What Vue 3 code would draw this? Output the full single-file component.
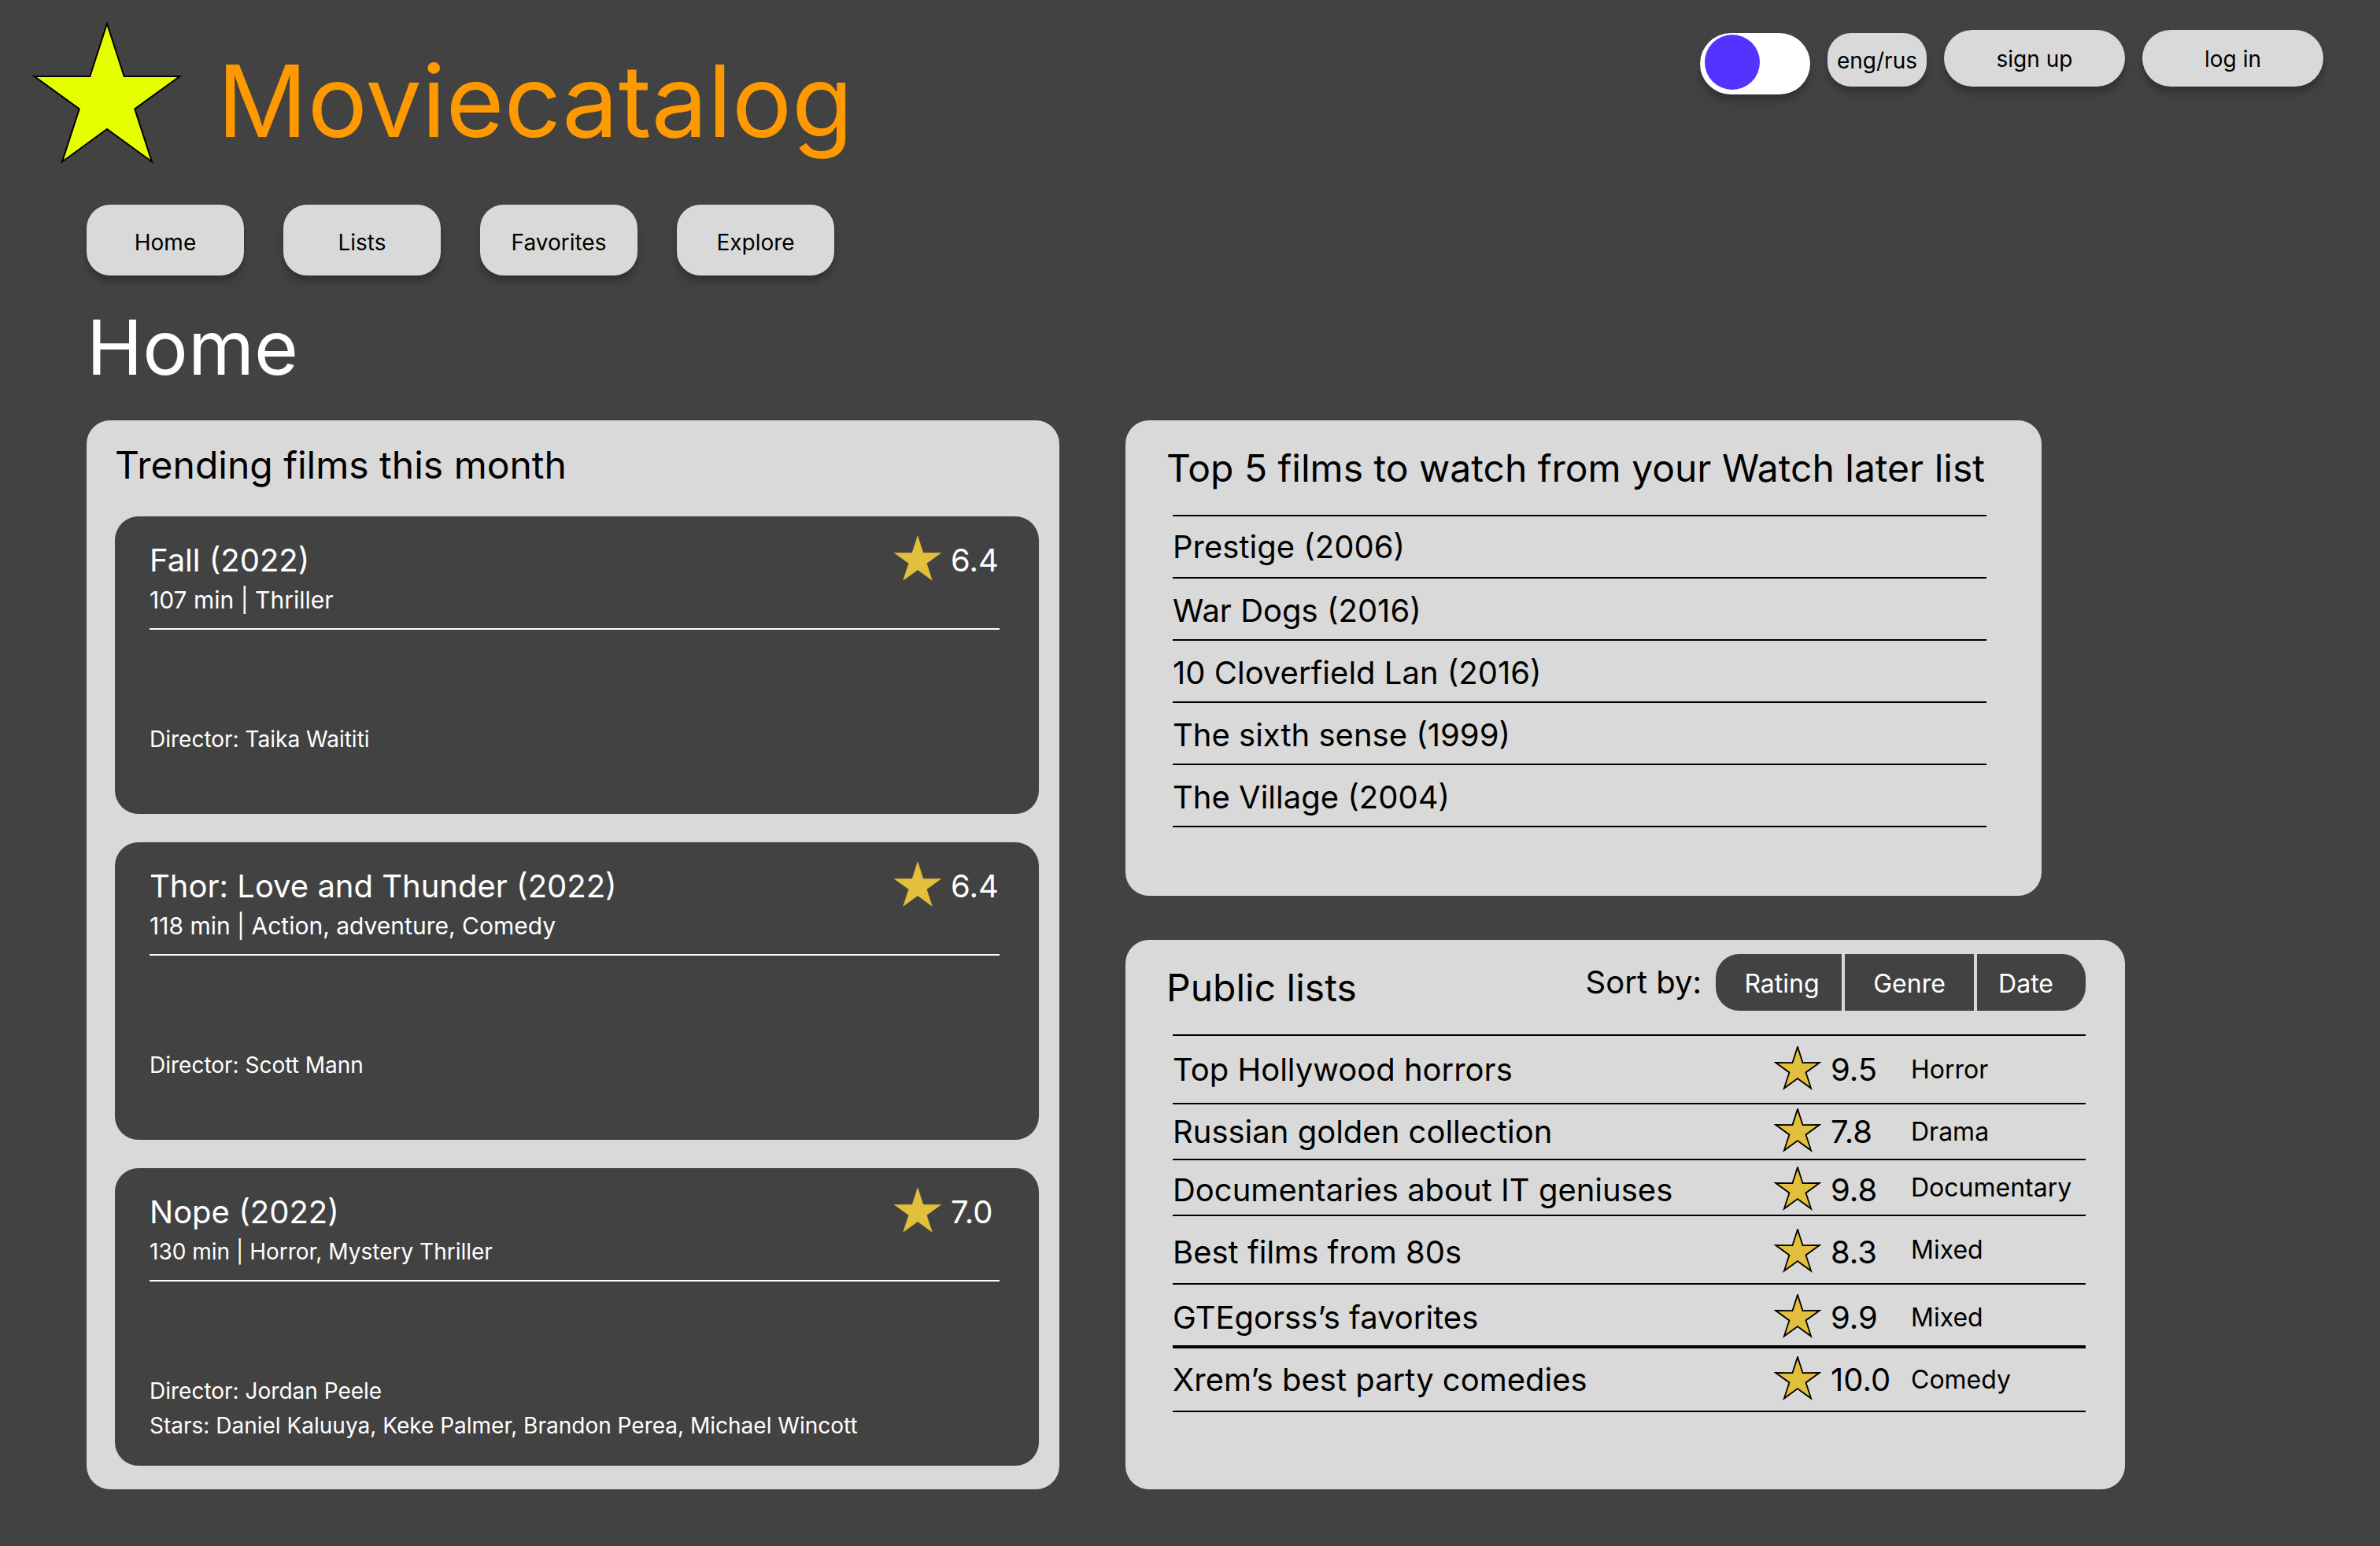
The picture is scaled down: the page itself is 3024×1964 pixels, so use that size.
<script setup>
import { ref } from 'vue'

const starPoints = (() => {
  const outer = 97
  const inner = 37
  const points = []
  for (let i = 0; i < 10; i++) {
    const radius = i % 2 === 0 ? outer : inner
    const angle = (Math.PI / 5) * i
    const x = 100 + radius * Math.sin(angle)
    const y = 100 - radius * Math.cos(angle)
    points.push(`${x.toFixed(1)},${y.toFixed(1)}`)
  }
  return points.join(' ')
})()

const light = ref(false)
const sortBy = ref('Rating')

const pages = ['Home', 'Lists', 'Favorites', 'Explore']
const sortKeys = ['Rating', 'Genre', 'Date']

const trending = [
  {
    title: 'Fall (2022)',
    rating: '6.4',
    length: '107 min',
    genres: 'Thriller',
    credits: ['Director: Taika Waititi'],
  },
  {
    title: 'Thor: Love and Thunder (2022)',
    rating: '6.4',
    length: '118 min',
    genres: 'Action, adventure, Comedy',
    credits: ['Director: Scott Mann'],
  },
  {
    title: 'Nope (2022)',
    rating: '7.0',
    length: '130 min',
    genres: 'Horror, Mystery Thriller',
    compact: true,
    credits: [
      'Director: Jordan Peele',
      'Stars: Daniel Kaluuya, Keke Palmer, Brandon Perea, Michael Wincott',
    ],
  },
]

const watchLater = [
  'Prestige (2006)',
  'War Dogs (2016)',
  '10 Cloverfield Lan (2016)',
  'The sixth sense (1999)',
  'The Village (2004)',
]

const publicLists = [
  { name: 'Top Hollywood horrors', rating: '9.5', genre: 'Horror', look: 'tall' },
  { name: 'Russian golden collection', rating: '7.8', genre: 'Drama', look: 'tight' },
  { name: 'Documentaries about IT geniuses', rating: '9.8', genre: 'Documentary', look: 'tight low' },
  { name: 'Best films from 80s', rating: '8.3', genre: 'Mixed', look: 'tall low' },
  { name: 'GTEgorss’s favorites', rating: '9.9', genre: 'Mixed', look: 'heavy' },
  { name: 'Xrem’s best party comedies', rating: '10.0', genre: 'Comedy', look: '' },
]
</script>

<template>
  <div class="page">
    <header class="top">
      <a class="brand" href="#home">
        <svg class="brand-star" viewBox="0 0 200 200" aria-hidden="true">
          <polygon :points="starPoints" />
        </svg>
        <span class="brand-name">Moviecatalog</span>
      </a>
      <div class="tools">
        <input v-model="light" class="switch" type="checkbox" role="switch" aria-label="Light theme" />
        <button class="pill lang" type="button">eng/rus</button>
        <button class="pill account" type="button">sign up</button>
        <button class="pill account" type="button">log in</button>
      </div>
    </header>

    <nav class="menu">
      <a v-for="page in pages" :key="page" class="menu-link" :href="`#${page.toLowerCase()}`">{{ page }}</a>
    </nav>

    <main class="content">
      <h1 class="heading">Home</h1>
      <div class="columns">
        <section class="panel trending">
          <h2 class="panel-title">Trending films this month</h2>
          <article v-for="film in trending" :key="film.title" class="film">
            <div class="film-head">
              <h3 class="film-title">{{ film.title }}</h3>
              <div class="score">
                <svg class="star" viewBox="0 0 200 200" aria-hidden="true">
                  <polygon :points="starPoints" />
                </svg>
                <span>{{ film.rating }}</span>
              </div>
            </div>
            <p class="film-meta" :class="{ compact: film.compact }">{{ film.length }} | {{ film.genres }}</p>
            <div class="film-credits">
              <p v-for="credit in film.credits" :key="credit">{{ credit }}</p>
            </div>
          </article>
        </section>

        <div class="side">
          <section class="panel later">
            <h2 class="panel-title">Top 5 films to watch from your Watch later list</h2>
            <ol class="later-list">
              <li v-for="film in watchLater" :key="film">{{ film }}</li>
            </ol>
          </section>

          <section class="panel public">
            <div class="public-head">
              <h2 class="panel-title">Public lists</h2>
              <div class="sort" role="group" aria-labelledby="sort-label">
                <span id="sort-label">Sort by:</span>
                <div class="segments">
                  <button
                    v-for="key in sortKeys"
                    :key="key"
                    class="segment"
                    type="button"
                    :aria-pressed="sortBy === key"
                    @click="sortBy = key"
                  >{{ key }}</button>
                </div>
              </div>
            </div>
            <table class="lists">
              <tbody>
                <tr v-for="list in publicLists" :key="list.name" :class="list.look">
                  <th scope="row">{{ list.name }}</th>
                  <td class="list-score">
                    <div class="score outlined">
                      <svg class="star" viewBox="0 0 200 200" aria-hidden="true">
                        <polygon :points="starPoints" />
                      </svg>
                      <span>{{ list.rating }}</span>
                    </div>
                  </td>
                  <td class="list-genre">{{ list.genre }}</td>
                </tr>
              </tbody>
            </table>
          </section>
        </div>
      </div>
    </main>
  </div>
</template>

<style>
body {
  margin: 0;
  background: #424242;
}
</style>

<style scoped>
.page {
  box-sizing: border-box;
  min-height: 100vh;
  padding: 27px 0 72px;
  background: #424242;
  color: #000;
  font-family: Inter, "Liberation Sans", sans-serif;
  font-size: 28px;
}

.page *,
.page *::before {
  box-sizing: border-box;
}

h1,
h2,
h3,
p,
ol {
  margin: 0;
  padding: 0;
  font-weight: 400;
}

button {
  border: 0;
  padding: 0;
  font: inherit;
  color: inherit;
  cursor: pointer;
}

/* Header */
.top {
  display: flex;
  justify-content: space-between;
  align-items: flex-start;
  padding: 0 72px 0 36px;
}

.brand {
  display: flex;
  gap: 40px;
  color: #ff9900;
  text-decoration: none;
}

.brand-star {
  width: 200px;
  height: 200px;
  fill: #e5ff00;
  stroke: #000;
  stroke-width: 2;
  stroke-miterlimit: 10;
}

.brand-name {
  padding-top: 24px;
  font-size: 127px;
  line-height: 154px;
}

.tools {
  display: flex;
  align-items: flex-start;
  gap: 22px;
  padding-top: 11px;
}

.switch {
  appearance: none;
  width: 140px;
  height: 78px;
  margin: 4px 0 0;
  padding: 2px 6px;
  border-radius: 39px;
  background: #fff;
  box-shadow: 0 8px 8px rgba(0, 0, 0, 0.25);
  cursor: pointer;
}

.switch::before {
  content: "";
  display: block;
  width: 70px;
  height: 70px;
  border-radius: 50%;
  background: #5533ff;
}

.switch:checked::before {
  margin-left: auto;
}

.pill {
  height: 72px;
  padding-top: 2px;
  border-radius: 36px;
  background: #d9d9d9;
  box-shadow: 0 8px 8px rgba(0, 0, 0, 0.25);
}

.lang {
  width: 126px;
  height: 68px;
  margin-top: 4px;
  border-radius: 30px;
}

.account {
  width: 230px;
}

/* Navigation */
.menu {
  display: flex;
  gap: 50px;
  margin-top: 33px;
  padding: 0 110px;
}

.menu-link {
  display: flex;
  align-items: center;
  justify-content: center;
  width: 200px;
  height: 90px;
  padding-top: 6px;
  border-radius: 30px;
  background: #d9d9d9;
  box-shadow: 0 8px 8px rgba(0, 0, 0, 0.25);
  color: #000;
  text-decoration: none;
}

/* Content */
.content {
  padding: 0 324px 0 110px;
}

.heading {
  margin-top: 33px;
  color: #fff;
  font-size: 96px;
  line-height: 116px;
}

.columns {
  display: grid;
  grid-template-columns: 1236fr 1270fr;
  gap: 84px;
  margin-top: 35px;
}

.panel {
  border-radius: 30px;
  background: #d9d9d9;
}

.panel-title {
  font-size: 48px;
  line-height: 58px;
}

.trending {
  display: flex;
  flex-direction: column;
  gap: 36px;
  padding: 28px 26px 30px 36px;
}

.film {
  min-height: 378px;
  padding: 24px 50px 24px 44px;
  border-radius: 30px;
  background: #424242;
  color: #fff;
}

.film-head {
  display: flex;
  justify-content: space-between;
  font-size: 40px;
  line-height: 64px;
}

.film-title {
  font-size: 40px;
}

.score {
  display: flex;
  align-items: center;
  gap: 10px;
  width: 136px;
}

.star {
  flex: none;
  width: 64px;
  height: 64px;
  fill: #e2bf3c;
  stroke: #e2bf3c;
  stroke-width: 2;
  stroke-miterlimit: 10;
}

.film-meta {
  height: 56px;
  border-bottom: 2px solid #fff;
  font-size: 30px;
  line-height: 36px;
}

.compact {
  font-size: 28px;
}

.film-credits {
  padding-top: 117px;
  line-height: 44px;
}

.side {
  display: flex;
  flex-direction: column;
  gap: 56px;
}

.later {
  margin-right: 106px;
  padding: 32px 70px 87px 60px;
}

.later .panel-title,
.public .panel-title {
  margin-left: -8px;
  white-space: nowrap;
}

.later-list {
  margin-top: 30px;
  border-top: 2px solid #000;
  list-style: none;
  font-size: 40px;
}

.later-list li {
  display: flex;
  align-items: center;
  height: 79px;
  border-bottom: 2px solid #000;
}

.later-list li + li {
  padding-top: 4px;
}

.public {
  padding: 18px 50px 98px 60px;
}

.public-head {
  display: flex;
  justify-content: space-between;
}

.public .panel-title {
  padding-top: 14px;
}

.sort {
  display: flex;
  gap: 18px;
  font-size: 40px;
  line-height: 72px;
}

.segments {
  display: flex;
  gap: 4px;
  height: 72px;
}

.segment {
  width: 164px;
  padding-top: 2px;
  background: #424242;
  color: #fff;
  font-size: 32px;
}

.segment:first-child {
  width: 160px;
  padding-left: 8px;
  border-radius: 30px 0 0 30px;
}

.segment:last-child {
  width: 138px;
  padding-right: 14px;
  border-radius: 0 30px 30px 0;
}

.lists {
  width: 100%;
  margin-top: 30px;
  border-collapse: separate;
  border-spacing: 0;
  border-top: 2px solid #000;
  font-size: 40px;
  line-height: 48px;
}

.lists th,
.lists td {
  height: 81px;
  padding: 0;
  border-bottom: 2px solid #000;
  font-weight: 400;
  text-align: left;
  white-space: nowrap;
}

.lists .tall > * {
  height: 87px;
}

.lists .tight > * {
  height: 71px;
}

.lists .low > th,
.lists .low .score {
  padding-top: 6px;
}

.lists .heavy > * {
  padding-top: 6px;
  border-bottom-width: 4px;
}

.lists .list-score {
  width: 176px;
}

.lists .list-genre {
  width: 222px;
  font-size: 32px;
}

.lists .score {
  gap: 12px;
  padding-left: 2px;
}

.lists .star {
  width: 60px;
  height: 60px;
  margin: -6px 0;
  stroke: #000;
  stroke-width: 6;
}
</style>
